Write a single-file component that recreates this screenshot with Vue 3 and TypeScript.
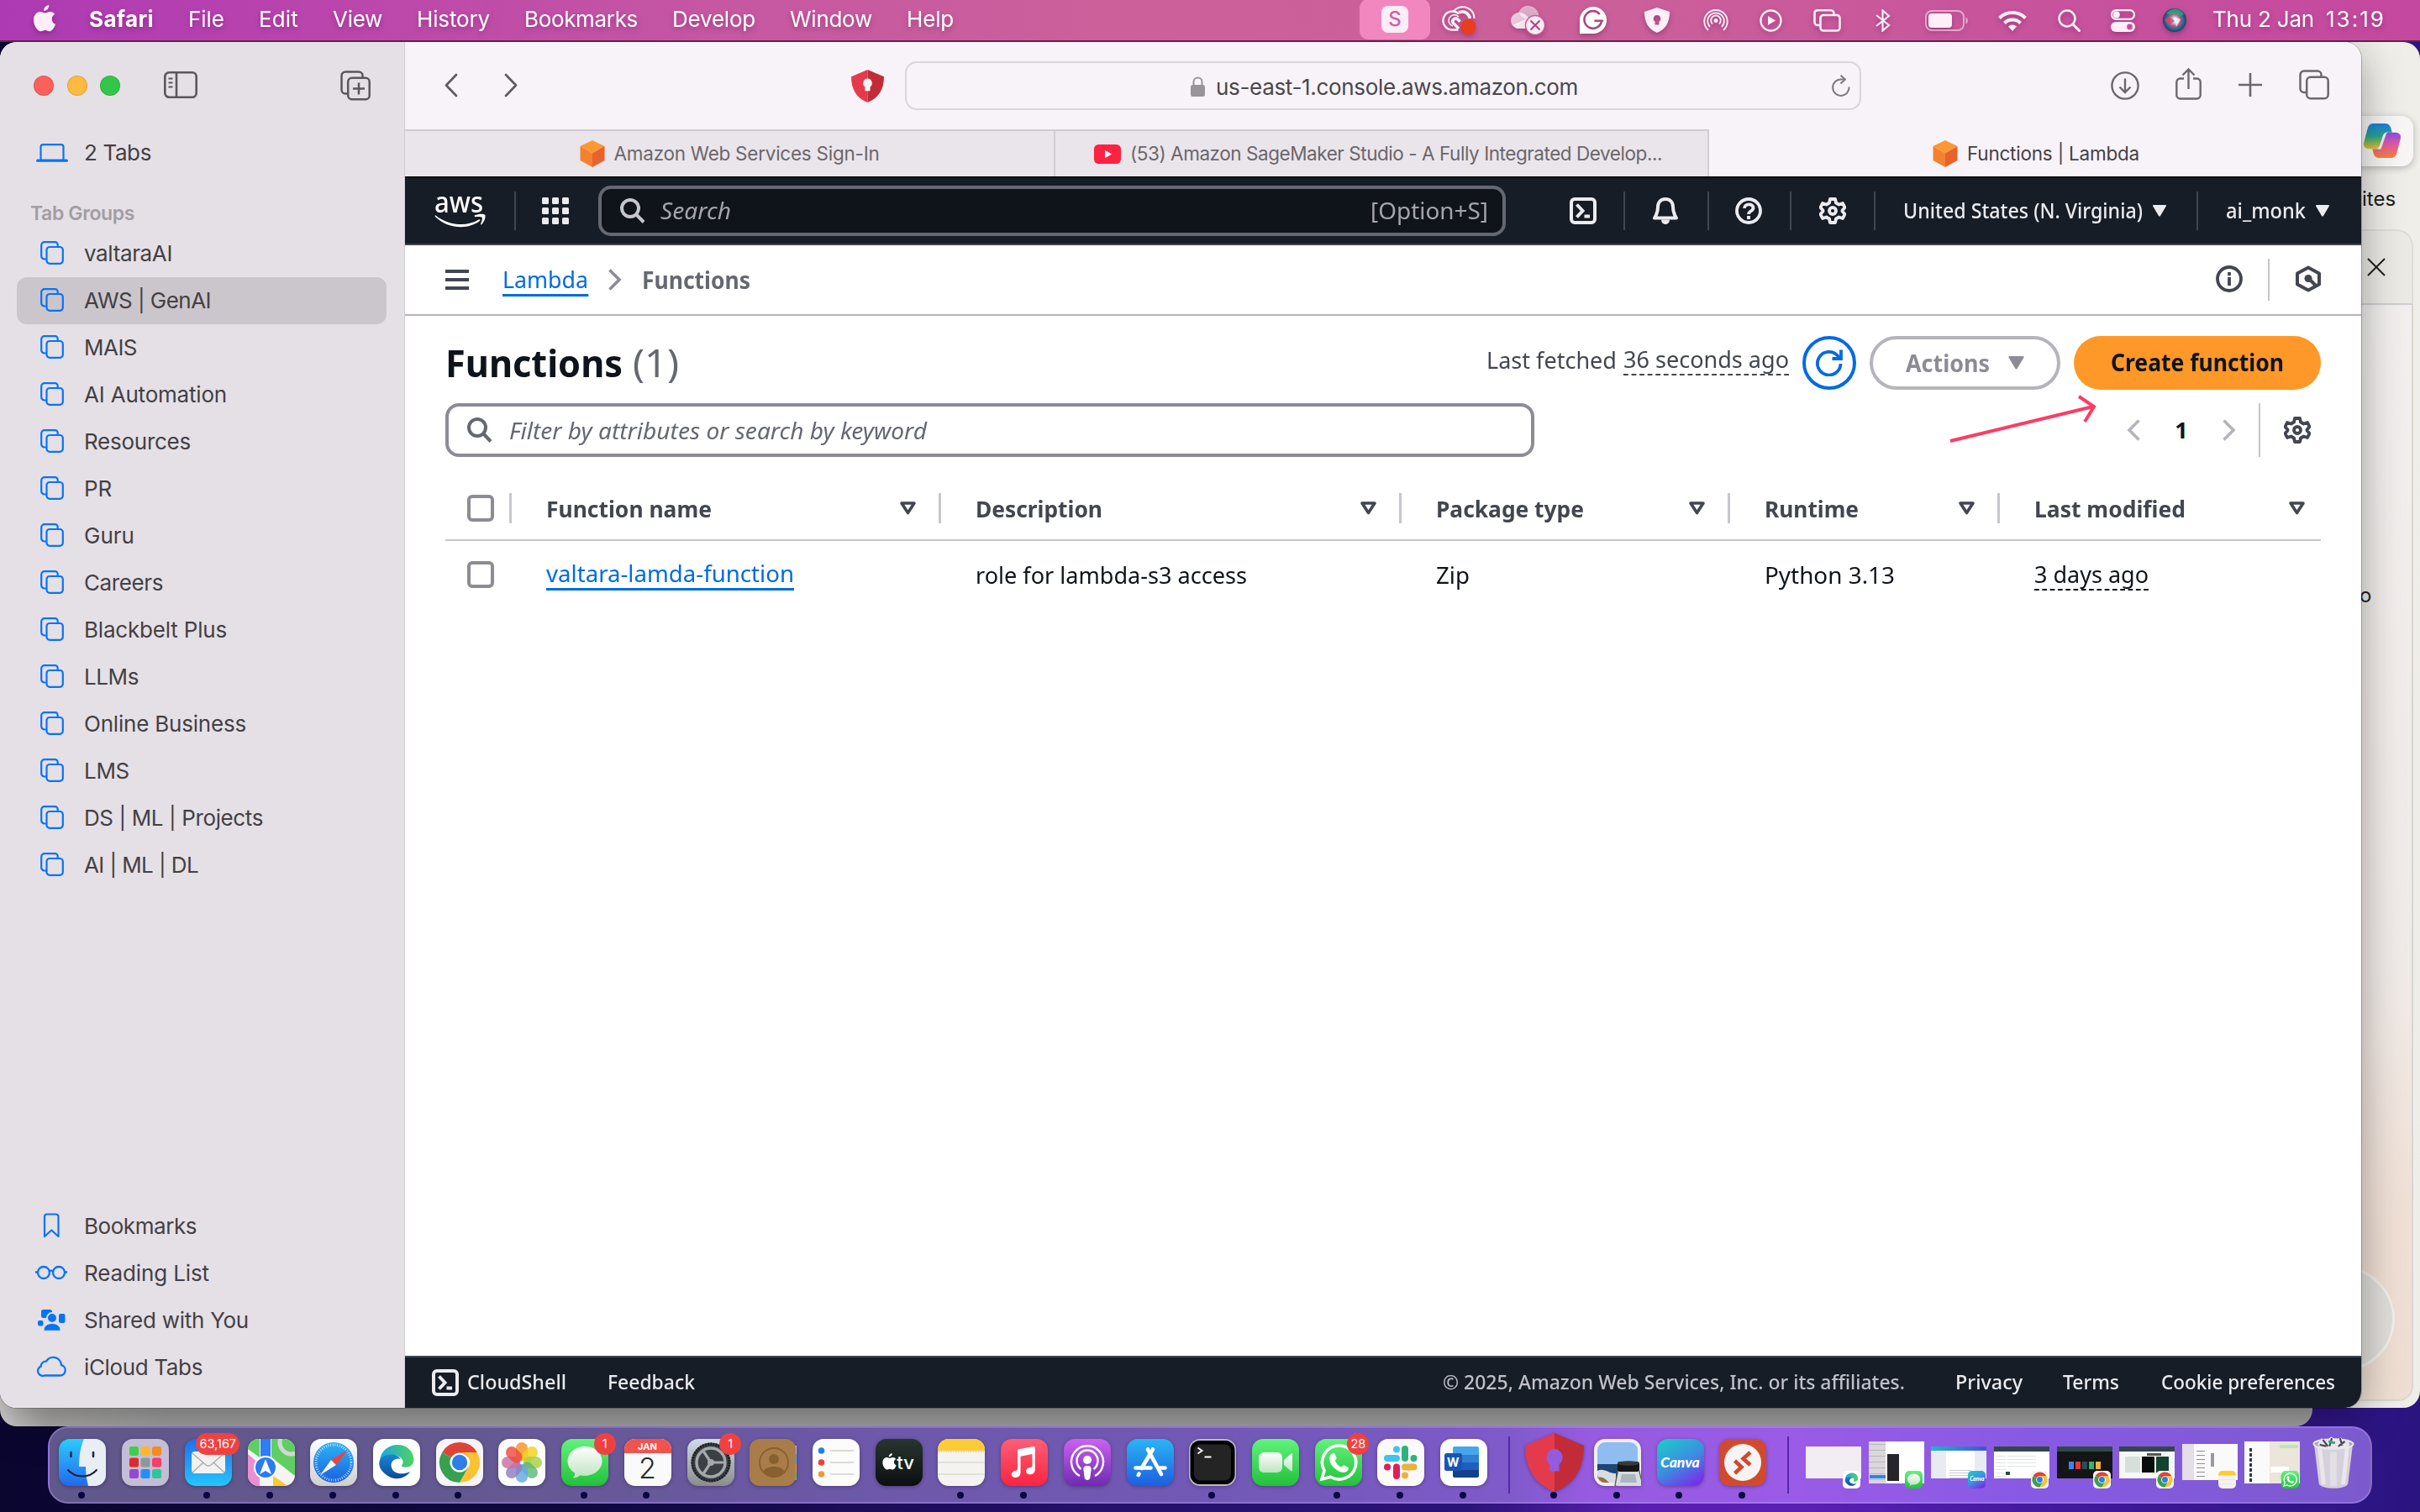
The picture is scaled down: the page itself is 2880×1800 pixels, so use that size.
<script setup lang="ts">
import type { Directive } from 'vue'

interface TrayItem { id: string; w: number; h: number; gap: number }
interface Entry { label: string; w: number }
interface DockApp { id: string; running?: boolean; badge?: string }
interface Thumb { id: string; h: number; top: number; app: string }

/* Sets a label to an exact advance width: by tracking, or with .squeeze by narrowing the glyphs. */
const vFit: Directive<HTMLElement, number> = {
  mounted(el, { value, modifiers }) {
    const natural = el.getBoundingClientRect().width
    if (modifiers.squeeze) {
      el.style.transform = `scaleX(${value / natural})`
      el.style.marginRight = `${value - natural}px`
    } else {
      el.style.letterSpacing = `${(value - natural) / (el.textContent ?? ' ').length}px`
    }
  },
}

const menus: Entry[] = [
  { label: 'File', w: 43 }, { label: 'Edit', w: 47 }, { label: 'View', w: 59 }, { label: 'History', w: 87 },
  { label: 'Bookmarks', w: 135 }, { label: 'Develop', w: 99 }, { label: 'Window', w: 98 }, { label: 'Help', w: 56 },
]

const tray: TrayItem[] = [
  { id: 'cc', w: 40, h: 34, gap: 14 },
  { id: 'cloudx', w: 40, h: 36, gap: 42 },
  { id: 'gram', w: 32, h: 32, gap: 42 },
  { id: 'shieldw', w: 30, h: 30, gap: 45 },
  { id: 'airdrop', w: 30, h: 28, gap: 40 },
  { id: 'play', w: 27, h: 27, gap: 37 },
  { id: 'screens', w: 33, h: 27, gap: 37 },
  { id: 'bt', w: 18, h: 27, gap: 41 },
  { id: 'battery', w: 52, h: 25, gap: 41 },
  { id: 'wifi', w: 34, h: 25, gap: 35 },
  { id: 'find', w: 27, h: 27, gap: 37 },
  { id: 'control', w: 29, h: 27, gap: 36 },
  { id: 'siri', w: 28, h: 28, gap: 33 },
]

const groups: Entry[] = [
  { label: 'valtaraAI', w: 105 }, { label: 'AWS | GenAI', w: 151 }, { label: 'MAIS', w: 63 }, { label: 'AI Automation', w: 170 },
  { label: 'Resources', w: 127 }, { label: 'PR', w: 33 }, { label: 'Guru', w: 60 }, { label: 'Careers', w: 94 },
  { label: 'Blackbelt Plus', w: 170 }, { label: 'LLMs', w: 65 }, { label: 'Online Business', w: 193 }, { label: 'LMS', w: 54 },
  { label: 'DS | ML | Projects', w: 213 }, { label: 'AI | ML | DL', w: 136 },
]

const library = [
  { icon: 'bookmark', label: 'Bookmarks', w: 134 },
  { icon: 'glasses', label: 'Reading List', w: 149 },
  { icon: 'shared', label: 'Shared with You', w: 196 },
  { icon: 'icloud', label: 'iCloud Tabs', w: 141 },
]

const columns: Entry[] = [
  { label: 'Function name', w: 197 }, { label: 'Description', w: 151 }, { label: 'Package type', w: 176 },
  { label: 'Runtime', w: 112 }, { label: 'Last modified', w: 180 },
]

const apps: DockApp[] = [
  { id: 'finder', running: true }, { id: 'launchpad' }, { id: 'mail', running: true, badge: '63,167' },
  { id: 'maps', running: true }, { id: 'safari', running: true }, { id: 'edge', running: true },
  { id: 'chrome', running: true }, { id: 'photos' }, { id: 'messages', running: true, badge: '1' },
  { id: 'calendar', running: true }, { id: 'settings', badge: '1' }, { id: 'contacts' }, { id: 'reminders' },
  { id: 'tv' }, { id: 'notes', running: true }, { id: 'music', running: true }, { id: 'podcasts' },
  { id: 'appstore' }, { id: 'terminal', running: true }, { id: 'facetime' },
  { id: 'whatsapp', running: true, badge: '28' }, { id: 'slack', running: true }, { id: 'word', running: true },
]
const apps2: DockApp[] = [
  { id: 'shield', running: true }, { id: 'preview', running: true }, { id: 'canva', running: true }, { id: 'rdp', running: true },
]
const thumbs: Thumb[] = [
  { id: 'blank', h: 38, top: 22, app: 'edge' },
  { id: 'chat', h: 50, top: 16, app: 'messages' },
  { id: 'doc', h: 38, top: 22, app: 'canva' },
  { id: 'page', h: 38, top: 22, app: 'chrome' },
  { id: 'dark', h: 38, top: 22, app: 'chrome' },
  { id: 'green', h: 38, top: 22, app: 'chrome' },
  { id: 'note', h: 43, top: 19, app: 'notes' },
  { id: 'wa', h: 50, top: 16, app: 'whatsapp' },
]
const petals = ['#f7941d', '#f2d21b', '#a8cf45', '#5fb878', '#62a9e0', '#8f7cc0', '#c9709f', '#ee4b3c']
</script>

<template>
  <div class="desktop">
    <svg class="defs" width="0" height="0">
      <defs>
        <linearGradient id="gBlue" x1="0" y1="0" x2="0" y2="1"><stop offset="0" stop-color="#2bb5f5" /><stop offset="1" stop-color="#1c5fe0" /></linearGradient>
        <linearGradient id="gMail" x1="0" y1="0" x2="0" y2="1"><stop offset="0" stop-color="#1e6ff0" /><stop offset="1" stop-color="#25c5fb" /></linearGradient>
        <linearGradient id="gFind" x1="0" y1="0" x2="0" y2="1"><stop offset="0" stop-color="#2ccbfd" /><stop offset="1" stop-color="#2368ee" /></linearGradient>
        <linearGradient id="gGreen" x1="0" y1="0" x2="0" y2="1"><stop offset="0" stop-color="#62f37c" /><stop offset="1" stop-color="#22c13b" /></linearGradient>
        <linearGradient id="gGrey" x1="0" y1="0" x2="0" y2="1"><stop offset="0" stop-color="#fff" /><stop offset="1" stop-color="#cfcfd0" /></linearGradient>
        <linearGradient id="gBub" x1="0" y1="0" x2="0" y2="1"><stop offset="0" stop-color="#fdfffd" /><stop offset="1" stop-color="#bfe3c2" /></linearGradient>
        <linearGradient id="gMus" x1="0" y1="0" x2="0" y2="1"><stop offset="0" stop-color="#fb5f76" /><stop offset="1" stop-color="#fa2440" /></linearGradient>
        <linearGradient id="gPod" x1="0" y1="0" x2="0" y2="1"><stop offset="0" stop-color="#cb62ef" /><stop offset="1" stop-color="#6f2bb0" /></linearGradient>
        <linearGradient id="gCanva" x1="0.2" y1="0" x2="0.8" y2="1"><stop offset="0" stop-color="#1fc6cb" /><stop offset="0.5" stop-color="#3a8fe0" /><stop offset="1" stop-color="#7a2be8" /></linearGradient>
        <linearGradient id="gTv" x1="0" y1="0" x2="0" y2="1"><stop offset="0" stop-color="#28352f" /><stop offset="1" stop-color="#0b0f10" /></linearGradient>
        <linearGradient id="gSet" x1="0" y1="0" x2="0" y2="1"><stop offset="0" stop-color="#cfdce6" /><stop offset="1" stop-color="#8b8b8b" /></linearGradient>
        <linearGradient id="gEdge" x1="0" y1="0" x2="1" y2="0"><stop offset="0" stop-color="#1fa5e0" /><stop offset="1" stop-color="#4cd45e" /></linearGradient>
        <linearGradient id="gEdge2" x1="0" y1="0" x2="0" y2="1"><stop offset="0" stop-color="#1787d4" /><stop offset="1" stop-color="#0f4b96" /></linearGradient>
        <linearGradient id="gCopA" x1="0" y1="0" x2="0" y2="1"><stop offset="0" stop-color="#1b7fe0" /><stop offset="0.5" stop-color="#2aa48f" /><stop offset="1" stop-color="#e8c52a" /></linearGradient>
        <linearGradient id="gCopB" x1="0" y1="0" x2="0" y2="1"><stop offset="0" stop-color="#8d4be8" /><stop offset="0.5" stop-color="#e55a9a" /><stop offset="1" stop-color="#f5853a" /></linearGradient>
        <radialGradient id="gSiri"><stop offset="0" stop-color="#fff" /><stop offset="0.25" stop-color="#a9d5ee" /><stop offset="0.5" stop-color="#c8527c" /><stop offset="0.75" stop-color="#1f6f96" /><stop offset="1" stop-color="#24405c" /></radialGradient>
      </defs>

      <!-- menu bar -->
      <symbol id="m-apple" viewBox="0 0 26 32"><path fill="currentColor" d="M18.3 0c.3 3.7-2.9 7-6.200 7C11.600 3.600 14.900.4 18.300 0zM25.200 11c-2.200 1.300-3.600 3.200-3.500 5.700 0 3 1.800 5.200 4.300 6.100-1 3.300-3.600 8.400-6.900 8.400-2 0-2.900-1.300-5.300-1.300-2.500 0-3.500 1.300-5.400 1.300C4.600 31.200 0 24.200 0 18c0-6.100 3.700-10 8-10 2.300 0 4 1.500 5.600 1.500 1.500 0 3.400-1.700 6.300-1.600 2.200.1 4.100 1.100 5.300 3.100z" /></symbol>
      <symbol id="m-cc" viewBox="0 0 40 34"><g fill="none" stroke="#fdeef8" stroke-linejoin="round"><path stroke-width="2" d="M14 6.500C18 1 25 0 30.500 2.500S38.500 10 38.500 15" /><path stroke-width="2.400" d="M19.500 28.500h-7a11 11 0 1 1 7.500-19" /><path stroke-width="3.600" d="M20 27l-6.500-6.500a3.500 3.500 0 0 1 5-4.800l3 3" /><path stroke-width="1.600" d="M13 24a6.800 6.800 0 1 1 7-11" /><path stroke-width="3.600" d="M20 8c7-3 12 1 13.500 7" /></g><circle cx="31.500" cy="25" r="9.200" fill="#ea3d1b" /></symbol>
      <symbol id="m-cloudx" viewBox="0 0 40 36"><path d="M9 9a12.500 12.500 0 0 1 24 2c1 4 0 8-4 9L14 15z" fill="#fff" opacity=".5" /><path d="M10 28A9.500 9.500 0 0 1 9 9c4.500-.5 9 1.500 13.500 7L3 25z" fill="#fff" opacity=".68" /><path d="M10 28c-3 0-5.500-1-7.500-4L22 15l4 3-4 10z" fill="#fff" opacity=".85" /><circle cx="29" cy="24" r="11.500" fill="#fbeaf4" stroke="#c8599a" stroke-width="1.500" /><path d="M23.500 18.500l11 11M34.500 18.500l-11 11" stroke="#a8467f" stroke-width="2" /></symbol>
      <symbol id="m-gram" viewBox="0 0 32 32"><path fill="#fff" d="M16 0a16 16 0 1 1 0 32H0V16A16 16 0 0 1 16 0z" /><path fill="none" stroke="#ab4884" stroke-width="2.600" d="M23.800 9A10.300 10.300 0 1 0 26 16.800h-8.500M27 16v1.800" /></symbol>
      <symbol id="m-shieldw" viewBox="0 0 30 30"><path fill="#fdeef8" fill-rule="evenodd" d="M15 0l15 5c0 13-5 21-15 25C5 26 0 18 0 5zM15 9a4.200 4.200 0 0 0-2.500 7.600V20.500h5v-3.900A4.200 4.200 0 0 0 15 9z" /></symbol>
      <symbol id="m-airdrop" viewBox="0 0 30 28"><g fill="none" stroke="#fdeef8" stroke-width="1.900"><path d="M6 26a13.700 13.700 0 1 1 18 0" /><path d="M8 22a9.800 9.800 0 1 1 14 0" /><path d="M11 18.500a5.800 5.800 0 1 1 8 0" /></g><circle cx="15" cy="14.500" r="2.500" fill="#fdeef8" /></symbol>
      <symbol id="m-play" viewBox="0 0 27 27"><circle cx="13.500" cy="13.500" r="12" fill="none" stroke="#fdeef8" stroke-width="2.400" /><path d="M10 8l9 5.500-9 5.500z" fill="#fdeef8" /></symbol>
      <symbol id="m-screens" viewBox="0 0 33 27"><g fill="none" stroke="#fdeef8" stroke-width="2.600"><path d="M8 19H5a3.500 3.500 0 0 1-3.500-3.500v-11A3.500 3.500 0 0 1 5 1.300h16a3.500 3.500 0 0 1 3.500 3.500V6" /><rect x="8.500" y="7" width="23" height="18.500" rx="3.500" /></g></symbol>
      <symbol id="m-bt" viewBox="0 0 18 27"><path fill="none" stroke="#fdeef8" stroke-width="2.200" d="M1 7l15 12-7.500 6.500V1.500L16 8 1 20" /></symbol>
      <symbol id="m-battery" viewBox="0 0 52 25"><rect x="1" y="1" width="45" height="23" rx="7" fill="none" stroke="#fdeef8" stroke-opacity=".55" stroke-width="2" /><rect x="4" y="4" width="28" height="17" rx="4" fill="#fdeef8" /><path d="M48.500 8.500c3 1 3 7 0 8z" fill="#fdeef8" opacity=".6" /></symbol>
      <symbol id="m-wifi" viewBox="0 0 34 25"><g fill="none" stroke="#fdeef8" stroke-width="4"><path d="M1.500 9.500a22 22 0 0 1 31 0" /><path d="M7.500 15.500a13.500 13.500 0 0 1 19 0" /></g><path d="M17 25l-5-5.500a7 7 0 0 1 10 0z" fill="#fdeef8" /></symbol>
      <symbol id="m-find" viewBox="0 0 27 27"><circle cx="11" cy="11" r="9.500" fill="none" stroke="#fdeef8" stroke-width="2.500" /><path d="M18 18l7.500 7.500" stroke="#fdeef8" stroke-width="3" stroke-linecap="round" /></symbol>
      <symbol id="m-control" viewBox="0 0 29 27"><rect x="1" y="1.200" width="27" height="10.600" rx="5.300" fill="none" stroke="#fdeef8" stroke-width="2.200" /><circle cx="6.800" cy="6.500" r="4" fill="#fdeef8" /><rect x="0" y="15" width="29" height="12" rx="6" fill="#fdeef8" /><circle cx="22.500" cy="21" r="3.400" fill="#c64f9d" /></symbol>
      <symbol id="m-siri" viewBox="0 0 28 28"><circle cx="14" cy="14" r="14" fill="url(#gSiri)" /><path d="M4 6C10-1 19-1 24 5c2 3-2 4-6 3-5-1-9 0-14-2z" fill="#3aa37e" opacity=".75" /><path d="M2 14c4-5 8-3 12 1-4 4-8 5-12-1z" fill="#e0406c" opacity=".8" /><path d="M13 10l8 3-5 9z" fill="#fff" opacity=".7" /></symbol>

      <!-- browser chrome -->
      <symbol id="i-panel" viewBox="0 0 40 32"><g fill="none" stroke="#5a565b" stroke-width="2.600"><rect x="1.300" y="1.300" width="37.400" height="29.400" rx="5" /><path d="M15 1.300v29.400" /><path d="M5.500 8.500h5M5.500 13.500h5M5.500 18.500h5" stroke-width="2" /></g></symbol>
      <symbol id="i-newgroup" viewBox="0 0 36 36"><g fill="none" stroke="#5a565b" stroke-width="2.500"><path d="M9 27.500H6A4.500 4.500 0 0 1 1.500 23V6A4.500 4.500 0 0 1 6 1.500h16A4.500 4.500 0 0 1 26.500 6v2.500" /><rect x="9.200" y="8.800" width="25.500" height="25.500" rx="4.500" /><path d="M22 14.500v14M15 21.500h14" /></g></symbol>
      <symbol id="i-group" viewBox="0 0 28 28"><g fill="none" stroke="#0a73f5" stroke-width="2.200"><path d="M7.500 21.500H5A3.800 3.800 0 0 1 1.200 17.700V5A3.800 3.800 0 0 1 5 1.200h12.500A3.200 3.200 0 0 1 20.700 4.400V7" /><rect x="7.500" y="7" width="19.300" height="19.800" rx="3.500" /></g></symbol>
      <symbol id="i-laptop" viewBox="0 0 38 22"><path d="M5.500 19V4a2.800 2.800 0 0 1 2.800-2.800h21.400A2.800 2.800 0 0 1 32.500 4v15" fill="none" stroke="#0a73f5" stroke-width="2.200" /><rect x="0" y="18.600" width="38" height="3.200" rx="1.600" fill="#0a73f5" /></symbol>
      <symbol id="i-bookmark" viewBox="0 0 38 30"><path d="M11 28V4.500A3 3 0 0 1 14 1.500h10.500a3 3 0 0 1 3 3V28l-8.200-7.500z" fill="none" stroke="#0a73f5" stroke-width="2.200" stroke-linejoin="round" /></symbol>
      <symbol id="i-glasses" viewBox="0 0 38 30"><g fill="none" stroke="#0a73f5" stroke-width="2.300"><circle cx="10" cy="15" r="7" /><circle cx="28" cy="15" r="7" /><path d="M0 14.500h3M35 14.500h3M16.500 13.500c1.500-1 3.500-1 5 0" /></g></symbol>
      <symbol id="i-shared" viewBox="0 0 38 30"><g fill="#0a73f5"><rect x="7" y="3" width="13" height="10" rx="2.500" /><rect x="28" y="8" width="7.500" height="11" rx="2" /><rect x="3" y="16" width="6.500" height="6.500" rx="2" /><circle cx="20" cy="13" r="6" stroke="#e5e0e6" stroke-width="2" /><path d="M10 27.500c0-5 4.500-8 10-8s10 3 10 8c0 .6-.4.800-1 .8H11c-.600 0-1-.2-1-.8z" stroke="#e5e0e6" stroke-width="1" /></g></symbol>
      <symbol id="i-icloud" viewBox="0 0 38 30"><path d="M11 25.500h18.500a6.300 6.300 0 0 0 1.500-12.400A9.700 9.700 0 0 0 13 8.600a6 6 0 0 0-6.300 6A5.600 5.600 0 0 0 11 25.500z" fill="none" stroke="#0a73f5" stroke-width="2.300" /></symbol>
      <symbol id="i-back" viewBox="0 0 17 29"><path d="M15 2L3 14.500 15 27" fill="none" stroke="#5f5b61" stroke-width="2.700" stroke-linecap="round" stroke-linejoin="round" /></symbol>
      <symbol id="i-shield" viewBox="0 0 70 70"><path fill="#e33b4c" d="M35 0L0 15c0 28 12 46 35 55z" /><path fill="#c12c38" d="M35 0l35 15c0 28-12 46-35 55z" /><path class="keyhole" d="M35 19a10 10 0 0 0-5.500 18v8.500h11V37A10 10 0 0 0 35 19z" /></symbol>
      <symbol id="i-lock" viewBox="0 0 17 24"><rect x="0" y="10" width="17" height="14" rx="2.500" fill="#98949a" /><path d="M3.500 11V6.500a5 5 0 0 1 10 0V11" fill="none" stroke="#98949a" stroke-width="2" /></symbol>
      <symbol id="i-reload" viewBox="0 0 22 26"><g fill="none" stroke="#7d797f" stroke-width="2"><path d="M20.500 14.500A9.700 9.700 0 1 1 11 5.500h5" /><path d="M10.500.8l5.500 4.700-5.500 5" stroke-linejoin="round" /></g></symbol>
      <symbol id="i-download" viewBox="0 0 34 34"><g fill="none" stroke="#6b676d" stroke-width="2.400"><circle cx="17" cy="17" r="15.600" /><path d="M17 8.500v16M10.500 18.500l6.500 6.500 6.500-6.500" /></g></symbol>
      <symbol id="i-share" viewBox="0 0 31 38"><g fill="none" stroke="#6b676d" stroke-width="2.400"><path d="M10 12.500H5.500A4.200 4.200 0 0 0 1.300 16.700v15.600a4.200 4.200 0 0 0 4.200 4.200h20a4.200 4.200 0 0 0 4.200-4.200V16.700a4.200 4.200 0 0 0-4.200-4.200H21" /><path d="M15.500 25V2M8.500 8.500l7-7 7 7" /></g></symbol>
      <symbol id="i-plus" viewBox="0 0 28 28"><path d="M14 0v28M0 14h28" stroke="#6b676d" stroke-width="2.600" /></symbol>
      <symbol id="i-tabs" viewBox="0 0 36 36"><g fill="none" stroke="#6b676d" stroke-width="2.500"><path d="M9 27H6A4.500 4.500 0 0 1 1.500 22.500V6A4.500 4.500 0 0 1 6 1.500h16A4.500 4.500 0 0 1 26.500 6v2.500" /><rect x="9.200" y="8.800" width="25.500" height="25.500" rx="4.500" /></g></symbol>
      <symbol id="i-cube" viewBox="0 0 30 32"><path fill="#fb9836" d="M15 0l14.500 7L15 15.500.5 7z" /><path fill="#f4812f" d="M.5 7L15 15.500V32L.5 24z" /><path fill="#e9612b" d="M29.500 7L15 15.500V32l14.500-8z" /></symbol>
      <symbol id="i-youtube" viewBox="0 0 32 23"><rect width="32" height="23" rx="5.500" fill="#fb2340" /><path d="M13 6.800l8 4.700-8 4.700z" fill="#fff" /></symbol>

      <!-- console -->
      <symbol id="a-smile" viewBox="0 0 64 18"><path d="M0 2c18 14 40 15 55 6 1.500-1 2.500.5 1.200 1.600C42 21 16 20 0 4z" fill="#fff" /><path d="M50 2.500c5-2.500 12-2 13-.5s-.5 8.500-4.500 12c-.6.500-1.200.2-1-.5 1-2.500 2.500-7 1.700-8.200-1-1.200-5.600-1-8.500-.800-.8 0-1.500-1-.7-2z" fill="#fff" /></symbol>
      <symbol id="a-grid" viewBox="0 0 32 32"><g fill="#ebebf0"><rect v-for="n in 9" :key="n" :x="((n - 1) % 3) * 12" :y="Math.floor((n - 1) / 3) * 12" width="8" height="8" rx="1.500" /></g></symbol>
      <symbol id="a-search" viewBox="0 0 30 30"><g fill="none" stroke="currentColor" stroke-width="4"><circle cx="12" cy="12" r="10" /><path d="M19 19l9 9.500" /></g></symbol>
      <symbol id="a-shell" viewBox="0 0 32 32"><g fill="none" stroke="#ebebf0" stroke-width="4"><rect x="2" y="2" width="28" height="28" rx="4" /><path d="M8.500 8.500l7 7.500-7 7.500" /><path d="M17.500 22.500H24" /></g></symbol>
      <symbol id="a-bell" viewBox="0 0 30 32"><path d="M15 2c-5.500 0-9 4-9 9.500 0 6-1 8.500-4 13h26c-3-4.500-4-7-4-13C24 6 20.500 2 15 2z" fill="none" stroke="#ebebf0" stroke-width="4" stroke-linejoin="round" /><path d="M10 26.500a5 5.500 0 0 0 10 0z" fill="#ebebf0" /></symbol>
      <symbol id="a-help" viewBox="0 0 32 32"><g fill="none" stroke="#ebebf0" stroke-width="3.800"><circle cx="16" cy="16" r="14" /><path d="M11 13c0-6 10.500-6 10.500-.500 0 4-5.500 3.500-5.500 7.500" /></g><rect x="14" y="22" width="4" height="4" fill="#ebebf0" /></symbol>
      <symbol id="a-gear" viewBox="0 0 32 32"><g fill="none" stroke="currentColor" stroke-width="3.800" stroke-linejoin="round"><path d="M13 2h6l1 4.500 3.500 2 4.500-1.500 2.500 5-3 3.500v1l3 3.500-2.500 5-4.500-1.500-3.500 2L19 30h-6l-1-4.500-3.500-2L4 25l-2.500-5 3-3.500v-1l-3-3.500L4 7l4.500 1.500 3.500-2z" /><circle cx="16" cy="16" r="4" /></g></symbol>
      <symbol id="a-caret" viewBox="0 0 16 14"><path d="M1 0h14c.8 0 1.200.8.800 1.500L9 13c-.5.800-1.500.8-2 0L.2 1.500C-.200.800.200 0 1 0z" fill="currentColor" /></symbol>
      <symbol id="a-sort" viewBox="0 0 21 16"><path d="M3 2h15l-7.500 11.500z" fill="none" stroke="#424650" stroke-width="3.600" stroke-linejoin="round" /></symbol>
      <symbol id="a-menu" viewBox="0 0 28 24"><path d="M0 2h28M0 12h28M0 22h28" stroke="#424650" stroke-width="4" /></symbol>
      <symbol id="a-chev" viewBox="0 0 17 26"><path d="M2.500 1.500L14 13 2.500 24.500" fill="none" stroke="currentColor" stroke-width="3.600" /></symbol>
      <symbol id="a-info" viewBox="0 0 32 32"><circle cx="16" cy="16" r="14" fill="none" stroke="#424650" stroke-width="3.800" /><path d="M16 14v10M16 8v4" stroke="#424650" stroke-width="3.800" /></symbol>
      <symbol id="a-hex" viewBox="0 0 30 32"><path d="M15 2.500l13 7v13l-13 7-13-7v-13z" fill="none" stroke="#424650" stroke-width="4" stroke-linejoin="round" /><circle cx="15" cy="15.500" r="4.500" fill="#424650" /><path d="M16 16l8 8" stroke="#424650" stroke-width="4" /></symbol>
      <symbol id="a-refresh" viewBox="0 0 32 32"><g fill="none" stroke="#006ce0" stroke-width="3.800"><path d="M29.500 17A13.800 13.800 0 1 1 26 7.500l3 3" /><path d="M30 .5V11H19.500" /></g></symbol>

      <!-- dock apps -->
      <symbol id="d-finder" viewBox="0 0 56 56"><rect width="56" height="56" rx="13" fill="url(#gFind)" /><path d="M30 0h13a13 13 0 0 1 13 13v30a13 13 0 0 1-13 13h-8c-2-7-3-15-3-23h-8C24 20 26 8 30 0z" fill="#e9eef5" /><path d="M14.500 16v5M41 16v5" stroke="#1a2c4c" stroke-width="2.600" stroke-linecap="round" /><path d="M11 37c9 10 25 10 34 0" fill="none" stroke="#1a2233" stroke-width="2" stroke-linecap="round" /></symbol>
      <symbol id="d-launchpad" viewBox="0 0 56 56"><rect width="56" height="56" rx="13" fill="#c4bdd6" /><rect x="9" y="9" width="11" height="11" rx="2.500" fill="#3ecf4a" /><rect x="22.500" y="9" width="11" height="11" rx="2.500" fill="#fbb727" /><rect x="36" y="9" width="11" height="11" rx="2.500" fill="#f58a22" /><rect x="9" y="22.500" width="11" height="11" rx="2.500" fill="#df2b2b" /><rect x="22.500" y="22.500" width="11" height="11" rx="2.500" fill="#8e989c" /><rect x="36" y="22.500" width="11" height="11" rx="2.500" fill="#fa3c68" /><rect x="9" y="36" width="11" height="11" rx="2.500" fill="#9746cf" /><rect x="22.500" y="36" width="11" height="11" rx="2.500" fill="#2190f7" /><rect x="36" y="36" width="11" height="11" rx="2.500" fill="#2fc597" /></symbol>
      <symbol id="d-mail" viewBox="0 0 56 56"><rect width="56" height="56" rx="13" fill="url(#gMail)" /><rect x="8" y="15" width="40" height="26" rx="4" fill="#f1f1f1" /><path d="M9 17l16 14c2 1.500 4 1.500 6 0l16-14M9 40l13-12M47 40L34 28" fill="none" stroke="#aaa" stroke-width="1.300" /></symbol>
      <symbol id="d-maps" viewBox="0 0 56 56"><clipPath id="cm"><rect width="56" height="56" rx="13" /></clipPath><g clip-path="url(#cm)"><rect width="56" height="56" fill="#f5f5f3" /><path d="M0 0h14v22L0 12z" fill="#5fcf63" /><path d="M0 18l14 12v26H0z" fill="#ea8fd0" /><path d="M28 0h28v44L28 22z" fill="#5fcf63" /><path d="M30 56V44l18 12z" fill="#fbca2e" /><circle cx="52" cy="4" r="14" fill="none" stroke="#d5d5d5" stroke-width="5" /><path d="M15 0h12v30H15z" fill="#2d7df6" /><circle cx="21" cy="34" r="14" fill="#fff" /><circle cx="21" cy="34" r="12" fill="#2a7cf3" /><path d="M21 24l7 18-7-4-7 4z" fill="#fff" /></g></symbol>
      <symbol id="d-safari" viewBox="0 0 56 56"><rect width="56" height="56" rx="13" fill="url(#gGrey)" /><circle cx="28" cy="28" r="24" fill="url(#gBlue)" /><circle cx="28" cy="28" r="21" fill="none" stroke="#e3f2ff" stroke-width="3" stroke-dasharray="0.800 1.900" /><path d="M45 13L31 31l-6-6z" fill="#f0413a" /><path d="M12 43l13-18 6 6z" fill="#f6f6f6" /></symbol>
      <symbol id="d-edge" viewBox="0 0 56 56"><rect width="56" height="56" rx="13" fill="#fff" /><path d="M8 26C10 2 46 0 48.500 24c0 9-8 11-14 9-2-1 2-3 1-7-2-8-20-10-27.500 0z" fill="url(#gEdge)" /><path d="M8 25c6-9 21-8 25-1-8-2-13 4-11 10 2 8 13 9 22 5-6 9-19 11-28 4C8 37 6 31 8 25z" fill="url(#gEdge2)" /></symbol>
      <symbol id="d-chrome" viewBox="0 0 56 56"><rect width="56" height="56" rx="13" fill="#f6f4f6" /><path d="M28 28L7.200 16A24 24 0 0 1 48.800 16z" fill="#dd4438" /><path d="M28 28h-.2L7.200 16A24 24 0 0 0 28 52l10.400-18z" fill="#36a14f" /><path d="M28 16h20.800A24 24 0 0 1 28 52l10.400-18A12 12 0 0 0 28 16z" fill="#fcc234" /><circle cx="28" cy="28" r="11.500" fill="#fff" /><circle cx="28" cy="28" r="9.200" fill="#2f7de9" /></symbol>
      <symbol id="d-photos" viewBox="0 0 56 56"><rect width="56" height="56" rx="13" fill="#fdfdfd" /><rect v-for="(c, n) in petals" :key="c" x="21" y="4" width="14" height="22" rx="7" :fill="c" opacity=".82" :transform="`rotate(${n * 45} 28 28)`" /></symbol>
      <symbol id="d-messages" viewBox="0 0 56 56"><rect width="56" height="56" rx="13" fill="url(#gGreen)" /><path d="M28 9c-12 0-20.500 8-20.500 17.500 0 6 3.500 11 8.500 14 .3 2-.5 4-2 6 3.500 0 6.500-1.500 8.500-3.300 2 .5 3.800.6 5.500.6 11 0 20.500-7.500 20.500-17.300S40 9 28 9z" fill="url(#gBub)" /></symbol>
      <symbol id="d-calendar" viewBox="0 0 56 56"><rect width="56" height="56" rx="13" fill="#fafafa" /><path d="M0 17v-4A13 13 0 0 1 13 0h30a13 13 0 0 1 13 13v4z" fill="#f2544d" /></symbol>
      <symbol id="d-settings" viewBox="0 0 56 56"><rect width="56" height="56" rx="13" fill="url(#gSet)" /><circle cx="28" cy="28" r="23.500" fill="#3c4043" /><circle cx="28" cy="28" r="22" fill="none" stroke="#191b1c" stroke-width="3" stroke-dasharray="1.600 1.600" /><circle cx="28" cy="28" r="17" fill="none" stroke="#a3a9ac" stroke-width="3.400" /><path d="M28 28L18 13M28 28h18M28 28L18 43" stroke="#a3a9ac" stroke-width="3.200" /><circle cx="28" cy="28" r="4" fill="#a3a9ac" /></symbol>
      <symbol id="d-contacts" viewBox="0 0 56 56"><rect x="50" y="8" width="8" height="10" fill="#b9b9b9" /><rect x="50" y="18" width="8" height="12" fill="#4fa9e0" /><rect x="50" y="30" width="8" height="10" fill="#f2913a" /><rect x="50" y="40" width="8" height="9" fill="#58c455" /><rect width="55" height="56" rx="12" fill="#a97d49" /><circle cx="29" cy="28" r="17" fill="none" stroke="#86612f" stroke-width="1.800" /><circle cx="29" cy="24" r="6" fill="#86612f" /><path d="M16.500 39c3-8 22-8 25 0a17 17 0 0 1-25 0z" fill="#86612f" /></symbol>
      <symbol id="d-reminders" viewBox="0 0 56 56"><rect width="56" height="56" rx="13" fill="#fcfcfb" /><path d="M21 14h28M21 28h28M21 42h28" stroke="#cfced2" stroke-width="1.600" /><circle cx="10.500" cy="14" r="3.800" fill="#1d80f6" /><circle cx="10.500" cy="28" r="3.800" fill="#ee4038" /><circle cx="10.500" cy="42" r="3.800" fill="#f39a2b" /></symbol>
      <symbol id="d-tv" viewBox="0 0 56 56"><rect width="56" height="56" rx="13" fill="url(#gTv)" /><svg x="8" y="17" width="17" height="20" color="#fff"><use href="#m-apple" /></svg></symbol>
      <symbol id="d-notes" viewBox="0 0 56 56"><rect width="56" height="56" rx="13" fill="#f4f3f0" /><path d="M0 14v-1A13 13 0 0 1 13 0h30a13 13 0 0 1 13 13v1z" fill="#fdcb36" /><path d="M0 15h56" stroke="#b9a87a" stroke-width="1.200" stroke-dasharray="1 1" /><path d="M0 28h56M0 42h56" stroke="#dcdbd8" stroke-width="1.400" /></symbol>
      <symbol id="d-music" viewBox="0 0 56 56"><rect width="56" height="56" rx="13" fill="url(#gMus)" /><path d="M20 14c0-1 .6-1.600 1.500-1.800L39 9c1-.2 1.800.4 1.800 1.500v26c0 3.500-2.500 5.800-6 5.800-2.800 0-4.800-1.500-4.800-3.800 0-2.600 2-3.900 5-4.500 1.800-.4 2.500-1 2.500-2.500V18l-14 2.800v19.500c0 3.500-2.500 5.700-5.800 5.700-2.900 0-4.900-1.500-4.900-3.800 0-2.600 2-3.900 5-4.500C19.500 37.300 20 36.500 20 35z" fill="#fff" /></symbol>
      <symbol id="d-podcasts" viewBox="0 0 56 56"><rect width="56" height="56" rx="13" fill="url(#gPod)" /><g fill="none" stroke="#fff" stroke-width="2.400"><path d="M19 44a19 19 0 1 1 18 0" /><path d="M20.500 36a12.500 12.500 0 1 1 15 0" /></g><circle cx="28" cy="25" r="5" fill="#fff" /><path d="M28 32c3.500 0 5 1.500 4.600 4.500l-1.300 10c-.6 3.300-6 3.300-6.600 0l-1.300-10C23 33.500 24.500 32 28 32z" fill="#fff" /></symbol>
      <symbol id="d-appstore" viewBox="0 0 56 56"><rect width="56" height="56" rx="13" fill="url(#gBlue)" /><g stroke="#fff" stroke-width="4.600" stroke-linecap="round"><path d="M31 12.500L17.500 35M25 12.500L41 42M10.500 34.500h18M37 34.500h8.500M14.500 41.500l-.8 1.500" /></g></symbol>
      <symbol id="d-terminal" viewBox="0 0 56 56"><rect width="56" height="56" rx="13" fill="#b9bdc2" /><rect x="1.500" y="2" width="53" height="52" rx="11.500" fill="#000" /><rect x="6" y="6.500" width="44" height="43" rx="7.500" fill="#242424" /><path d="M10.500 10.500l5 3.500-5 3.500M18.500 21.500h8" fill="none" stroke="#fff" stroke-width="1.900" /></symbol>
      <symbol id="d-facetime" viewBox="0 0 56 56"><rect width="56" height="56" rx="13" fill="url(#gGreen)" /><rect x="8" y="16" width="28" height="24" rx="6" fill="url(#gBub)" /><path d="M38 25l8-7c1-.8 2-.4 2 .8v18.400c0 1.200-1 1.600-2 .8l-8-7z" fill="url(#gBub)" /></symbol>
      <symbol id="d-whatsapp" viewBox="0 0 56 56"><rect width="56" height="56" rx="13" fill="url(#gGreen)" /><path d="M28.500 8a20 20 0 1 1-10 37.200L8 48l3-10.300A20 20 0 0 1 28.500 8z" fill="none" stroke="#fff" stroke-width="3.600" /><path d="M20 17.500c2-1.500 3.500-.5 4 1l1.500 4c.3 1-.2 1.800-1.800 3.400 1.600 3.800 4.500 6.300 8 7.700 1.500-1.700 2.300-2.500 3.300-2.200l4.200 2c1.200.8.800 3.300-.6 4.700-3 3-7.500 2.200-13-1.400C19.500 32.500 16.500 27 17.500 21.500c.3-1.700 1.200-3.200 2.500-4z" fill="#fff" /></symbol>
      <symbol id="d-slack" viewBox="0 0 56 56"><rect width="56" height="56" rx="13" fill="#fbfafb" /><g stroke-width="8" stroke-linecap="round"><path d="M12 23h11M23 12.500v.1" stroke="#40c3ef" /><path d="M33 12v11M43.500 23v.1" stroke="#2fb27d" /><path d="M43.500 33.500H33M33 43.500v.1" stroke="#eab13f" /><path d="M23 33.500V44M12 33.500h.1" stroke="#df1f5b" /></g></symbol>
      <symbol id="d-word" viewBox="0 0 56 56"><rect width="56" height="56" rx="13" fill="#fff" /><path d="M15 11a2 2 0 0 1 2-2h27a2 2 0 0 1 2 2v8H15z" fill="#47a5ec" /><path d="M15 19h31v9H15z" fill="#2f7fd6" /><path d="M15 28h31v9H15z" fill="#1d5fbd" /><path d="M15 37h31v7a2 2 0 0 1-2 2H17a2 2 0 0 1-2-2z" fill="#143f8c" /><rect x="5" y="17" width="21" height="21" rx="2.500" fill="#1b55b0" /></symbol>
      <symbol id="d-preview" viewBox="0 0 56 56"><rect width="56" height="56" rx="13" fill="#f1eef0" /><rect x="4" y="4" width="48" height="48" rx="9" fill="#8fbdf0" /><path d="M4 30h48v13a9 9 0 0 1-9 9H13a9 9 0 0 1-9-9z" fill="#1f4673" /><path d="M4 38c8-4 14 4 22 3v11H13a9 9 0 0 1-9-9z" fill="#d8dde2" /><path d="M4 46c6-2 10 2 14 6h-5a9 9 0 0 1-9-9z" fill="#96703f" /><path d="M29 35h24l5 20c0 3-33 3-33 0z" fill="#d9dce0" stroke="#5c5c5c" stroke-width="1.300" /><path d="M33 42h16l2 10H31z" fill="#aab6bf" /><rect x="28" y="27" width="26" height="12" rx="3" fill="#161616" /><ellipse cx="41" cy="29" rx="13" ry="2.800" fill="#3a3a3a" /></symbol>
      <symbol id="d-canva" viewBox="0 0 56 56"><rect width="56" height="56" rx="13" fill="url(#gCanva)" /></symbol>
      <symbol id="d-rdp" viewBox="0 0 56 56"><rect width="56" height="56" rx="13" fill="#d14a2d" /><circle cx="28" cy="28" r="22" fill="#f6f4f4" /><path d="M18.500 26l8 7.500-8 7.500M37 16l-8.500 7.500 8.500 7.500" fill="none" stroke="#d14a2d" stroke-width="4.600" /></symbol>
      <symbol id="d-trash" viewBox="0 0 52 66"><path d="M2 10h48l-6 49c-1 8-35 8-36 0z" fill="#d6d0da" /><path d="M9 14l5 46M43 14l-5 46" stroke="#e9e6ec" stroke-width="5" /><path d="M26 20v42" stroke="#e2dee6" stroke-width="8" /><ellipse cx="26" cy="10" rx="24.500" ry="6" fill="#a9a4ae" stroke="#eeecf1" stroke-width="2" /><path d="M6 11l5-8 7 3 5-5 6 4 6-3 4 4 6 1 1 5-12 5H14z" fill="#e9e7ea" /><path d="M13 5l6 8M24 3l-3 10M34 3l3 9M40 7l-8 6M9 11l8 2" stroke="#4c4a50" stroke-width="2.300" /><path d="M20 7l8 2" stroke="#39a085" stroke-width="3" /></symbol>
      <symbol id="i-copilot" viewBox="0 0 46 42"><path d="M12 0h15c4 0 6 3 7 7l1 4h-6c-4 0-5 3-6 7l-3 9c-1 3-3 4-6 4H8c-6 0-9-3-7-9L5 7c1-4 3-7 7-7z" fill="url(#gCopA)" /><path d="M34 42H19c-4 0-6-3-7-7l-1-4h6c4 0 5-3 6-7l3-9c1-3 3-4 6-4h6c6 0 9 3 7 9l-4 15c-1 4-3 7-7 7z" fill="url(#gCopB)" /><path d="M23 20l3-7c1-2 2-3 5-3h-2l-7 20c-1 2-2 2-4 1z" fill="#f3eef2" opacity=".9" /></symbol>
    </svg>

    <header class="menubar">
      <svg class="apple"><use href="#m-apple" /></svg>
      <span v-fit="77" class="t app-name">Safari</span>
      <nav class="menus"><span v-for="m in menus" :key="m.label" v-fit="m.w" class="t">{{ m.label }}</span></nav>
      <div class="snagit"><span>S</span></div>
      <svg v-for="i in tray" :key="i.id" class="tray" :style="{ width: i.w + 'px', height: i.h + 'px', marginLeft: i.gap + 'px' }"><use :href="'#m-' + i.id" /></svg>
      <span v-fit="121" class="t date">Thu 2 Jan</span>
      <span v-fit="71" class="t clock">13:19</span>
    </header>

    <section class="win-right">
      <div class="copilot"><svg><use href="#i-copilot" /></svg></div>
      <span class="favs">ites</span>
      <div class="side-tab"><svg viewBox="0 0 22 22"><path d="M1 1l20 20M21 1L1 21" stroke="#222" stroke-width="2" /></svg></div>
      <div class="side-page"><span>o</span><div class="bubble"></div></div>
    </section>
    <section class="win-grey"></section>

    <main class="window">
      <aside class="sidebar">
        <div class="lights"><i class="red"></i><i class="yellow"></i><i class="green"></i><svg class="panel"><use href="#i-panel" /></svg><svg class="newgroup"><use href="#i-newgroup" /></svg></div>
        <div class="row tabs2"><svg class="laptop"><use href="#i-laptop" /></svg><span v-fit="80" class="t">2 Tabs</span></div>
        <div class="caption"><span v-fit="124" class="t">Tab Groups</span></div>
        <div v-for="g in groups" :key="g.label" class="row" :class="{ active: g.label === 'AWS | GenAI' }">
          <svg class="grp"><use href="#i-group" /></svg><span v-fit="g.w" class="t">{{ g.label }}</span>
        </div>
        <div class="library">
          <div v-for="l in library" :key="l.label" class="row"><svg class="lib"><use :href="'#i-' + l.icon" /></svg><span v-fit="l.w" class="t">{{ l.label }}</span></div>
        </div>
      </aside>

      <div class="browser">
        <div class="toolbar">
          <svg class="nav-arrow"><use href="#i-back" /></svg>
          <svg class="nav-arrow fwd"><use href="#i-back" /></svg>
          <svg class="ext"><use href="#i-shield" /></svg>
          <div class="url">
            <svg class="lock"><use href="#i-lock" /></svg>
            <span v-fit="431" class="t host">us-east-1.console.aws.amazon.com</span>
            <svg class="reload"><use href="#i-reload" /></svg>
          </div>
          <svg class="download"><use href="#i-download" /></svg>
          <svg class="share"><use href="#i-share" /></svg>
          <svg class="plus"><use href="#i-plus" /></svg>
          <svg class="tabsicon"><use href="#i-tabs" /></svg>
        </div>
        <div class="tabbar">
          <div class="tab one"><svg class="cube"><use href="#i-cube" /></svg><span v-fit="316" class="t">Amazon Web Services Sign-In</span></div>
          <div class="tab two"><svg class="yt"><use href="#i-youtube" /></svg><span v-fit="633" class="t">(53) Amazon SageMaker Studio - A Fully Integrated Develop...</span></div>
          <div class="tab three"><svg class="cube"><use href="#i-cube" /></svg><span v-fit="205" class="t">Functions | Lambda</span></div>
        </div>

        <div class="console">
          <div class="topnav">
            <div class="logo"><span v-fit.squeeze="58" class="t">aws</span><svg><use href="#a-smile" /></svg></div>
            <i class="sep s1"></i>
            <svg class="ic grid"><use href="#a-grid" /></svg>
            <div class="search"><svg><use href="#a-search" /></svg><span v-fit.squeeze="84" class="t ital">Search</span><span v-fit.squeeze="140" class="t opt">[Option+S]</span></div>
            <svg class="ic shell"><use href="#a-shell" /></svg><i class="sep"></i>
            <svg class="ic bell"><use href="#a-bell" /></svg><i class="sep s3"></i>
            <svg class="ic"><use href="#a-help" /></svg><i class="sep s4"></i>
            <svg class="ic"><use href="#a-gear" /></svg><i class="sep s4"></i>
            <span v-fit.squeeze="285" class="t region">United States (N. Virginia)</span><svg class="caret"><use href="#a-caret" /></svg>
            <i class="sep s2"></i><span v-fit.squeeze="95" class="t region">ai_monk</span><svg class="caret"><use href="#a-caret" /></svg>
          </div>

          <div class="crumbs">
            <svg class="burger"><use href="#a-menu" /></svg>
            <span v-fit.squeeze="102" class="t link">Lambda</span>
            <svg class="chev"><use href="#a-chev" /></svg>
            <span v-fit.squeeze="129" class="t here">Functions</span>
            <svg class="ic info"><use href="#a-info" /></svg><i class="crumb-sep"></i><svg class="ic hex"><use href="#a-hex" /></svg>
          </div>

          <div class="content">
            <div class="title">
              <h1><span v-fit.squeeze="211" class="t">Functions</span><span v-fit.squeeze="55" class="t count">(1)</span></h1>
              <span class="fetched"><span v-fit.squeeze="155" class="t">Last fetched</span><span v-fit.squeeze="197" class="t dashed">36 seconds ago</span></span>
              <button class="refresh"><svg><use href="#a-refresh" /></svg></button>
              <button class="actions"><span v-fit.squeeze="100" class="t">Actions</span><svg><use href="#a-caret" /></svg></button>
              <button class="create"><span v-fit.squeeze="206" class="t">Create function</span></button>
            </div>
            <div class="filter">
              <div class="input"><svg><use href="#a-search" /></svg><span v-fit.squeeze="497" class="t ital">Filter by attributes or search by keyword</span></div>
              <svg class="pg prev"><use href="#a-chev" /></svg><b>1</b><svg class="pg"><use href="#a-chev" /></svg>
              <i class="pg-sep"></i><svg class="pg-gear"><use href="#a-gear" /></svg>
              <svg class="pointer" viewBox="0 0 180 64"><g fill="none" stroke="#fb3d64" stroke-width="4"><path d="M3 56L173 15" /><path d="M156 3l18 12-11 18" /></g></svg>
            </div>
            <div class="table">
              <div class="tr head">
                <div class="cell check"><i></i></div>
                <div v-for="c in columns" :key="c.label" class="cell"><span v-fit.squeeze="c.w" class="t">{{ c.label }}</span><svg><use href="#a-sort" /></svg></div>
              </div>
              <div class="tr">
                <div class="cell check"><i></i></div>
                <div class="cell"><span v-fit.squeeze="295" class="t link">valtara-lamda-function</span></div>
                <div class="cell"><span v-fit.squeeze="323" class="t">role for lambda-s3 access</span></div>
                <div class="cell"><span v-fit.squeeze="40" class="t">Zip</span></div>
                <div class="cell"><span v-fit.squeeze="155" class="t">Python 3.13</span></div>
                <div class="cell"><span v-fit.squeeze="136" class="t dashed">3 days ago</span></div>
              </div>
            </div>
          </div>

          <footer class="footer">
            <svg class="ic"><use href="#a-shell" /></svg>
            <span v-fit.squeeze="118" class="t cs">CloudShell</span>
            <span v-fit.squeeze="104" class="t fb">Feedback</span>
            <span v-fit.squeeze="550" class="t copy">© 2025, Amazon Web Services, Inc. or its affiliates.</span>
            <span v-fit.squeeze="80" class="t privacy">Privacy</span>
            <span v-fit.squeeze="67" class="t terms">Terms</span>
            <span v-fit.squeeze="207" class="t cookie">Cookie preferences</span>
          </footer>
        </div>
      </div>
    </main>

    <div class="dock">
      <div v-for="a in apps" :key="a.id" class="app">
        <svg><use :href="'#d-' + a.id" /></svg>
        <template v-if="a.id === 'calendar'"><span class="face month">JAN</span><span class="face day">2</span></template>
        <span v-if="a.id === 'tv'" class="face tv">tv</span>
        <span v-if="a.id === 'word'" class="face word">W</span>
        <span v-if="a.badge" class="badge">{{ a.badge }}</span><i v-if="a.running" class="dot"></i>
      </div>
      <i class="dsep"></i>
      <div v-for="a in apps2" :key="a.id" class="app" :class="a.id">
        <svg><use :href="(a.id === 'shield' ? '#i-' : '#d-') + a.id" /></svg>
        <span v-if="a.id === 'canva'" class="face canva-name">Canva</span><i class="dot"></i>
      </div>
      <i class="dsep"></i>
      <div v-for="(t, n) in thumbs" :key="n" class="mini">
        <div class="shot" :class="t.id" :style="{ height: t.h + 'px', marginTop: t.top + 'px' }">
          <i v-if="t.id === 'dark'" class="cards"></i>
          <template v-if="t.id === 'green'"><i class="g1"></i><i class="g2"></i><i class="g3"></i></template>
        </div>
        <svg><use :href="'#d-' + t.app" /></svg>
        <span v-if="t.app === 'canva'" class="face mini-canva">Canva</span>
      </div>
      <svg class="trash"><use href="#d-trash" /></svg>
    </div>
  </div>
</template>

<style>
body { margin: 0; overflow: hidden; }
</style>

<style scoped>
* { box-sizing: border-box; }
svg { display: block; flex: none; overflow: visible; }
.defs { position: absolute; }
.t { display: inline-block; white-space: pre; flex: none; transform-origin: 0 50%; }
.desktop { position: relative; width: 2880px; height: 1800px; overflow: hidden; font-family: Inter, sans-serif; font-size: 26px; background: linear-gradient(90deg, #0b0630 0, #0f0840 700px, #25106a 1300px, #2b1478 1750px, #5a1fb0 1950px, #5a1fb4 2150px, #42199c 2450px, #2a1480 2880px); }

.menubar { position: absolute; inset: 0 0 auto; height: 50px; padding: 0 0 4px 40px; display: flex; align-items: center; color: #fff; background: linear-gradient(90deg, #ad3ab4 0, #b843ae 320px, #c657a2 850px, #cb609b 1300px, #cb5f9a 1950px, #c4489f 2880px); border-bottom: 2px solid #5b2547; }
.menubar .t, .menubar svg { filter: drop-shadow(0 3px 3px rgba(60, 0, 50, .3)); }
.apple { width: 26px; height: 32px; margin-top: -1px; color: #fdeef8; }
.app-name { margin-left: 40px; font-weight: 700; }
.menus { display: flex; gap: 41px; margin-left: 41px; }
.snagit { width: 84px; height: 48px; margin: 2px 0 0 483px; border-radius: 10px; background: #f287c0; display: flex; align-items: center; justify-content: center; flex: none; }
.snagit span { width: 32px; height: 32px; border-radius: 8px; background: #fcedf6; color: #c966a3; font-size: 24px; line-height: 32px; text-align: center; font-weight: 500; }
.tray { margin-top: 4px; }
.date { margin-left: 31px; }
.clock { margin-left: 14px; }

.win-right { position: absolute; left: 2600px; top: 50px; width: 280px; height: 1626px; border-radius: 20px; background: linear-gradient(#efeee9, #eeede7); overflow: hidden; }
.win-right .copilot { position: absolute; right: 8px; top: 88px; width: 100px; height: 60px; border-radius: 14px; background: #f8f6f5; box-shadow: 0 2px 8px rgba(0, 0, 0, .25); }
.copilot svg { width: 46px; height: 41px; margin: 9px 0 0 40px; }
.favs { position: absolute; left: 211px; top: 172px; font-size: 24px; color: #1d1d1d; }
.side-tab { position: absolute; right: 8px; top: 223px; width: 100px; height: 90px; border: 2px solid #deddd8; border-bottom-color: #cfced0; border-radius: 0 20px 0 0; background: #eceae5; }
.side-tab svg { width: 22px; height: 22px; margin: 32px 0 0 43px; }
.side-page { position: absolute; right: 8px; top: 313px; bottom: 8px; width: 200px; background: linear-gradient(#f2efee 0, #f1ebe8 800px, #efdfd4 1100px, #efdfd3 100%); border-right: 2px solid #d9d6d2; border-bottom: 2px solid #d9d6d2; border-radius: 0 0 18px 0; }
.side-page span { position: absolute; left: 136px; top: 331px; font-size: 24px; color: #222; }
.bubble { position: absolute; right: 20px; bottom: 34px; width: 124px; height: 124px; border: 3px solid #f2eeea; border-radius: 62px; background: #e2deda; }
.win-grey { position: absolute; left: 0; top: 200px; width: 2752px; height: 1498px; border-radius: 20px; background: linear-gradient(90deg, #d5d3d2 0, #b3b1b0 60px, #a8a8a8 200px, #a8a8a8 100%); }

.window { position: absolute; left: 0; top: 50px; width: 2810px; height: 1626px; border-radius: 20px; display: flex; overflow: hidden; box-shadow: 0 0 0 1px rgba(0, 0, 0, .22), 0 14px 50px rgba(0, 0, 0, .36); clip-path: inset(0 -80px -80px -2px); background: #fff; }
.sidebar { width: 482px; flex: none; display: flex; flex-direction: column; background: #e5e0e6; color: #434044; border-right: 1px solid #d2cdd3; padding: 0 21px 0 20px; }
.lights { height: 104px; display: flex; align-items: center; padding-left: 20px; flex: none; }
.lights i { width: 24px; height: 24px; border-radius: 50%; margin-right: 15.500px; border: 1px solid rgba(0, 0, 0, .12); }
.red { background: #fc605b; } .yellow { background: #fcbb40; } .green { background: #34c648; }
.panel { width: 40px; height: 32px; margin: -3px 0 0 36px; }
.newgroup { width: 36px; height: 36px; margin: -1px 0 0 170px; }
.row { height: 56px; flex: none; display: flex; align-items: center; border-radius: 12px; }
.row .t { margin-top: -1px; }
.row.active { background: #cbc6cc; }
.tabs2 { padding-left: 23px; }
.laptop { width: 38px; height: 22px; margin-right: 19px; }
.grp { width: 28px; height: 28px; margin: -2px 24px 0 28px; }
.lib { width: 38px; height: 30px; margin: -2px 20px 0 22px; }
.caption { height: 64px; flex: none; padding: 30px 0 0 16px; font-size: 23px; font-weight: 600; color: #a29da3; }
.library { margin-top: auto; padding-bottom: 20px; }

.browser { flex: 1; display: flex; flex-direction: column; background: #f7f3f9; }
.toolbar { height: 104px; flex: none; display: flex; align-items: center; padding-left: 46px; }
.nav-arrow { width: 17px; height: 29px; margin-top: -2px; }
.fwd { transform: scaleX(-1); margin-left: 55px; }
.ext { width: 39px; height: 39px; margin-left: 396px; }
.keyhole { fill: var(--hole, #f7f3f9); }
.url { width: 1138px; height: 58px; margin-left: 25px; border: 2px solid #dad5dc; border-radius: 14px; display: flex; align-items: center; color: #4a474b; flex: none; }
.lock { width: 17px; height: 24px; margin: 2px 13px 0 338px; }
.host { margin-top: 2px; }
.reload { width: 22px; height: 26px; margin-left: 302px; }
.download { width: 34px; height: 34px; margin: -1px 0 0 297px; }
.share { width: 31px; height: 38px; margin: -5px 0 0 43px; }
.plus { width: 28px; height: 28px; margin: -3px 0 0 44px; }
.tabsicon { width: 36px; height: 36px; margin: -3px 0 0 44px; }
.tabbar { height: 56px; flex: none; display: flex; font-size: 22.500px; color: #6a666b; }
.tab { height: 56px; display: flex; align-items: center; justify-content: center; background: #eae5eb; border-top: 2px solid #d0cbd1; border-right: 2px solid #d3ced4; flex: none; }
.tab .t { margin-top: -1px; }
.one { width: 774px; } .two { width: 778px; padding-right: 8px; } .three { flex: 1; background: none; border-color: transparent; color: #454146; padding-left: 4px; }
.cube { width: 30px; height: 32px; margin-right: 11px; }
.yt { width: 32px; height: 23px; margin-right: 11px; }

.console { flex: 1; display: flex; flex-direction: column; background: #fff; color: #0f141a; font-family: "Noto Sans", "Open Sans", sans-serif; font-size: 28px; }
.topnav { height: 82px; flex: none; display: flex; align-items: center; padding-left: 34px; background: #161d26; border-top: 2px solid #000; border-bottom: 2px solid #424650; color: #ebebf0; }
.logo { width: 64px; height: 46px; font-size: 35px; line-height: 26px; font-weight: 500; color: #fff; padding-left: 1px; margin-top: -2px; }
.logo .t { display: block; width: max-content; }
.logo svg { width: 64px; height: 17px; margin: 1px 0 0 -1px; }
.sep { width: 2px; height: 46px; background: #424650; margin: 0 32px; flex: none; }
.s1 { margin: 0 31px 0 32px; }
.s2 { margin: 0 33px 0 36px; }
.s3 { margin: 0 31px 0 34px; }
.s4 { margin: 0 33px 0 33px; }
.ic { width: 32px; height: 32px; }
.search { width: 1080px; height: 60px; margin-left: 35px; border: 4px solid #656871; border-radius: 15px; background: #0f141a; display: flex; align-items: center; padding: 0 17px 0 22px; color: #a4a4ad; flex: none; }
.search svg { width: 30px; height: 30px; color: #c6c6cd; margin-right: 18px; }
.search .t { margin-top: -3px; }
.ital { font-style: italic; }
.opt { margin-left: auto; }
.shell { margin-left: 76px; }
.region { font-size: 25px; font-weight: 500; margin-top: -3px; }
.caret { width: 16px; height: 14px; margin-left: 12px; }

.crumbs { height: 84px; flex: none; display: flex; align-items: center; padding-left: 48px; border-bottom: 2px solid #b4b4bb; }
.burger { width: 28px; height: 24px; margin: -1px 40px 0 0; }
.link { color: #006ce0; line-height: 36px; border-bottom: 3px solid #006ce0; }
.chev { width: 17px; height: 26px; color: #8c8c94; margin: 0 24px 0 23px; }
.here { color: #656871; font-weight: 700; margin-top: -1px; }
.info { margin: -2px 0 0 1744px; }
.crumb-sep { width: 2px; height: 50px; background: #c6c6cd; margin: 0 31px 0 30px; flex: none; }
.hex { width: 30px; margin-top: -2px; }

.content { flex: 1; padding: 24px 48px 0; }
.title { display: flex; height: 64px; align-items: center; }
h1 { margin: 0 auto 0 0; font-size: 45px; line-height: 64px; font-weight: 700; display: flex; }
.count { margin-left: 12px; font-weight: 400; color: #656871; }
.fetched { display: flex; color: #424650; margin: -8px 16px 0 0; }
.fetched .dashed { margin-left: 8px; }
.dashed { line-height: 36px; border-bottom: 2px dashed currentColor; }
button { font: inherit; font-weight: 700; height: 64px; border-radius: 32px; padding: 0; display: flex; align-items: center; justify-content: center; flex: none; }
.refresh { width: 64px; border: 4px solid #006ce0; background: #fff; margin-right: 16px; }
.refresh svg { width: 32px; height: 32px; margin-left: -1px; }
.actions { width: 227px; border: 4px solid #b4b4bb; background: #fff; color: #8c8c94; margin-right: 16px; }
.actions svg { width: 21px; height: 16px; margin-left: 21px; }
.create { width: 294px; border: 0; background: #fe9828; color: #0f141a; }
.create .t { margin-top: -2px; }
.filter { position: relative; display: flex; height: 64px; margin-top: 16px; align-items: center; }
.input { width: 1296px; height: 64px; border: 4px solid #8c8c94; border-radius: 16px; display: flex; align-items: center; padding-left: 22px; color: #656871; flex: none; }
.input svg { width: 30px; height: 30px; margin-right: 20px; }
.pg { width: 17px; height: 26px; color: #b4b4bb; }
.prev { margin-left: 705px; transform: scaleX(-1); }
.filter b { width: 96px; text-align: center; font-size: 27px; margin-top: -2px; }
.pg-sep { width: 2px; height: 64px; background: #c6c6cd; margin: 0 28px 0 27px; }
.pg-gear { width: 32px; height: 32px; color: #424650; }
.pointer { position: absolute; left: 1788px; top: -11px; width: 180px; height: 64px; }
.table { margin-top: 24px; }
.tr { display: grid; grid-template-columns: 78px 511px 548px 391px 321px 383px; height: 80px; }
.tr:not(.head) .t { margin-top: -1px; }
.head { height: 76px; border-bottom: 2px solid #c6c6cd; font-weight: 700; color: #424650; font-size: 27px; }
.cell { display: flex; align-items: center; padding-left: 42px; position: relative; }
.check { padding-left: 26px; }
.check i { width: 32px; height: 32px; border: 4px solid #8c8c94; border-radius: 6px; }
.head .check i { margin-top: -1px; }
.head .cell svg { width: 21px; height: 16px; margin: 0 28px 0 auto; }
.head .cell:last-child svg { margin-right: 18px; }
.head .cell:not(:last-child)::after { content: ""; position: absolute; right: -1px; top: 19px; width: 3px; height: 36px; background: #c6c6cd; }

.footer { height: 62px; flex: none; display: flex; align-items: center; background: #161d26; border-top: 2px solid #424650; padding: 0 31px 0 32px; color: #ebebf0; font-size: 24px; font-weight: 500; }
.footer .t { margin-top: -3px; }
.cs { margin-left: 10px; }
.fb { margin-left: 49px; }
.copy { margin-left: auto; color: #c0c0c8; }
.privacy { margin-left: 60px; } .terms { margin-left: 48px; } .cookie { margin-left: 50px; }

.dock { position: absolute; left: 57px; top: 1698px; width: 2766px; height: 92px; border: 2px solid rgba(190, 160, 255, .35); border-radius: 24px; display: flex; padding-left: 2px; background: linear-gradient(90deg, #60578a 0, #645891 500px, #6d58aa 1000px, #7459ba 1500px, #805acb 1740px, #965be0 1830px, #9a5be6 2080px, #885ae4 2350px, #7b5acd 2766px); }
.app { position: relative; width: 74.730px; flex: none; display: flex; flex-direction: column; align-items: center; padding-top: 13px; }
.app svg { width: 56px; height: 56px; filter: drop-shadow(0 1px 2px rgba(0, 0, 0, .3)); }
.app.shield { padding-top: 6px; --hole: #945bdf; }
.app.shield svg { width: 70px; height: 70px; }
.face { position: absolute; color: #fff; text-align: center; }
.month { left: 9px; top: 15px; width: 56px; font-size: 11px; line-height: 14px; font-weight: 700; }
.day { left: 9px; top: 29px; width: 56px; font-size: 34px; line-height: 38px; font-weight: 300; color: #2b2b2b; }
.tv { left: 35px; top: 28px; font-size: 22px; line-height: 26px; font-weight: 500; }
.word { left: 14px; top: 31px; width: 21px; font-size: 14px; line-height: 19px; font-weight: 700; }
.canva-name { left: 9px; top: 29px; width: 56px; font: italic 900 17.500px/24px Lato, sans-serif; }
.mini-canva { left: 48px; top: 56px; width: 21px; font: italic 900 6.500px/10px Lato, sans-serif; }
.dot { position: absolute; bottom: 4px; left: 32px; width: 8px; height: 8px; border-radius: 50%; background: #0c0440; }
.badge { position: absolute; top: 6px; left: 48px; min-width: 26px; height: 26px; padding: 0 4px; border-radius: 13px; background: #f04141; color: #fff; font-size: 14.500px; line-height: 26px; text-align: center; }
.app:nth-child(3) .badge { left: 23px; }
.dsep { width: 2px; height: 68px; margin: 10px 15.700px 0; background: #5428a8; flex: none; }
.mini { position: relative; width: 74.600px; padding-left: 4px; flex: none; }
.mini > svg { position: absolute; right: 6px; top: 51px; width: 21px; height: 21px; }
.shot { width: 66px; background: #f2ecf3; overflow: hidden; display: flex; }
.chat { background: linear-gradient(#2a82f5, #2a82f5) 1px 40px / 19px 4px no-repeat, linear-gradient(#26262a, #26262a) 22px 15px / 14px 32px no-repeat, repeating-linear-gradient(#d9d6dc 0 3px, #b8b5bc 3px 4px, #d9d6dc 4px 7px) 0 0 / 20px 50px no-repeat, #fff; }
.doc { background: linear-gradient(90deg, #1fb8c9, #4a4fd6) 0 0 / 66px 5px no-repeat, repeating-linear-gradient(#fff 0 2px, #c9c9cf 2px 3px) 22px 26px / 26px 12px no-repeat, linear-gradient(#fff, #fff) 18px 5px / 34px 33px no-repeat, #e9ebf3; }
.page { background: linear-gradient(#33474b, #33474b) 0 0 / 66px 6px no-repeat, linear-gradient(#2c4a44, #2c4a44) 14px 30px / 5px 4px no-repeat, repeating-linear-gradient(#fff 0 3px, #dfe4e2 3px 4px) 2px 8px / 12px 28px no-repeat, repeating-linear-gradient(#fff 0 3px, #e2e6e4 3px 4px) 16px 8px / 34px 16px no-repeat, #fff; }
.dark { background: linear-gradient(#33474b, #33474b) 0 0 / 66px 6px no-repeat, #141516; }
.cards { width: 38px; height: 9px; margin: 18px 0 0 14px; background: linear-gradient(90deg, #3f82f2 0 6px, transparent 6px 8px, #e3373c 8px 14px, transparent 14px 16px, #2d4d55 16px 22px, transparent 22px 24px, #33b56d 24px 30px, transparent 30px 32px, #f0b23a 32px); }
.green.shot { background: linear-gradient(#33474b, #33474b) 0 0 / 66px 6px no-repeat, linear-gradient(#555, #555) 33px 8px / 17px 3px no-repeat, #f6f8f7; gap: 2px; padding: 12px 0 0 7px; }
.shot .g1, .shot .g2, .shot .g3 { width: 18px; height: 19px; background: #d5e0da; }
.shot .g2 { background: #0a0c0b; width: 15px; } .shot .g3 { background: #114530; width: 15px; }
.note { background: repeating-linear-gradient(transparent 0 4px, #8f8d92 4px 5px) 17px 4px / 10px 36px no-repeat, linear-gradient(#e5dde8, #e5dde8) 0 0 / 14px 43px no-repeat, linear-gradient(#9b999e, #9b999e) 34px 11px / 4px 16px no-repeat, #fbfafb; }
.wa { background: repeating-linear-gradient(#28384e 0 4px, transparent 4px 6px) 6px 8px / 3px 40px no-repeat, linear-gradient(#b9e8b2, #b9e8b2) 42px 4px / 22px 4px no-repeat, linear-gradient(#fff, #fff) 31px 30px / 22px 7px no-repeat, linear-gradient(#b9e8b2, #b9e8b2) 42px 40px / 21px 5px no-repeat, linear-gradient(#ece5dc, #ece5dc) 30px 0 / 36px 50px no-repeat, #fafafa; }
.trash { width: 50px; height: 66px; margin: 8px 0 0 10px; }
</style>
